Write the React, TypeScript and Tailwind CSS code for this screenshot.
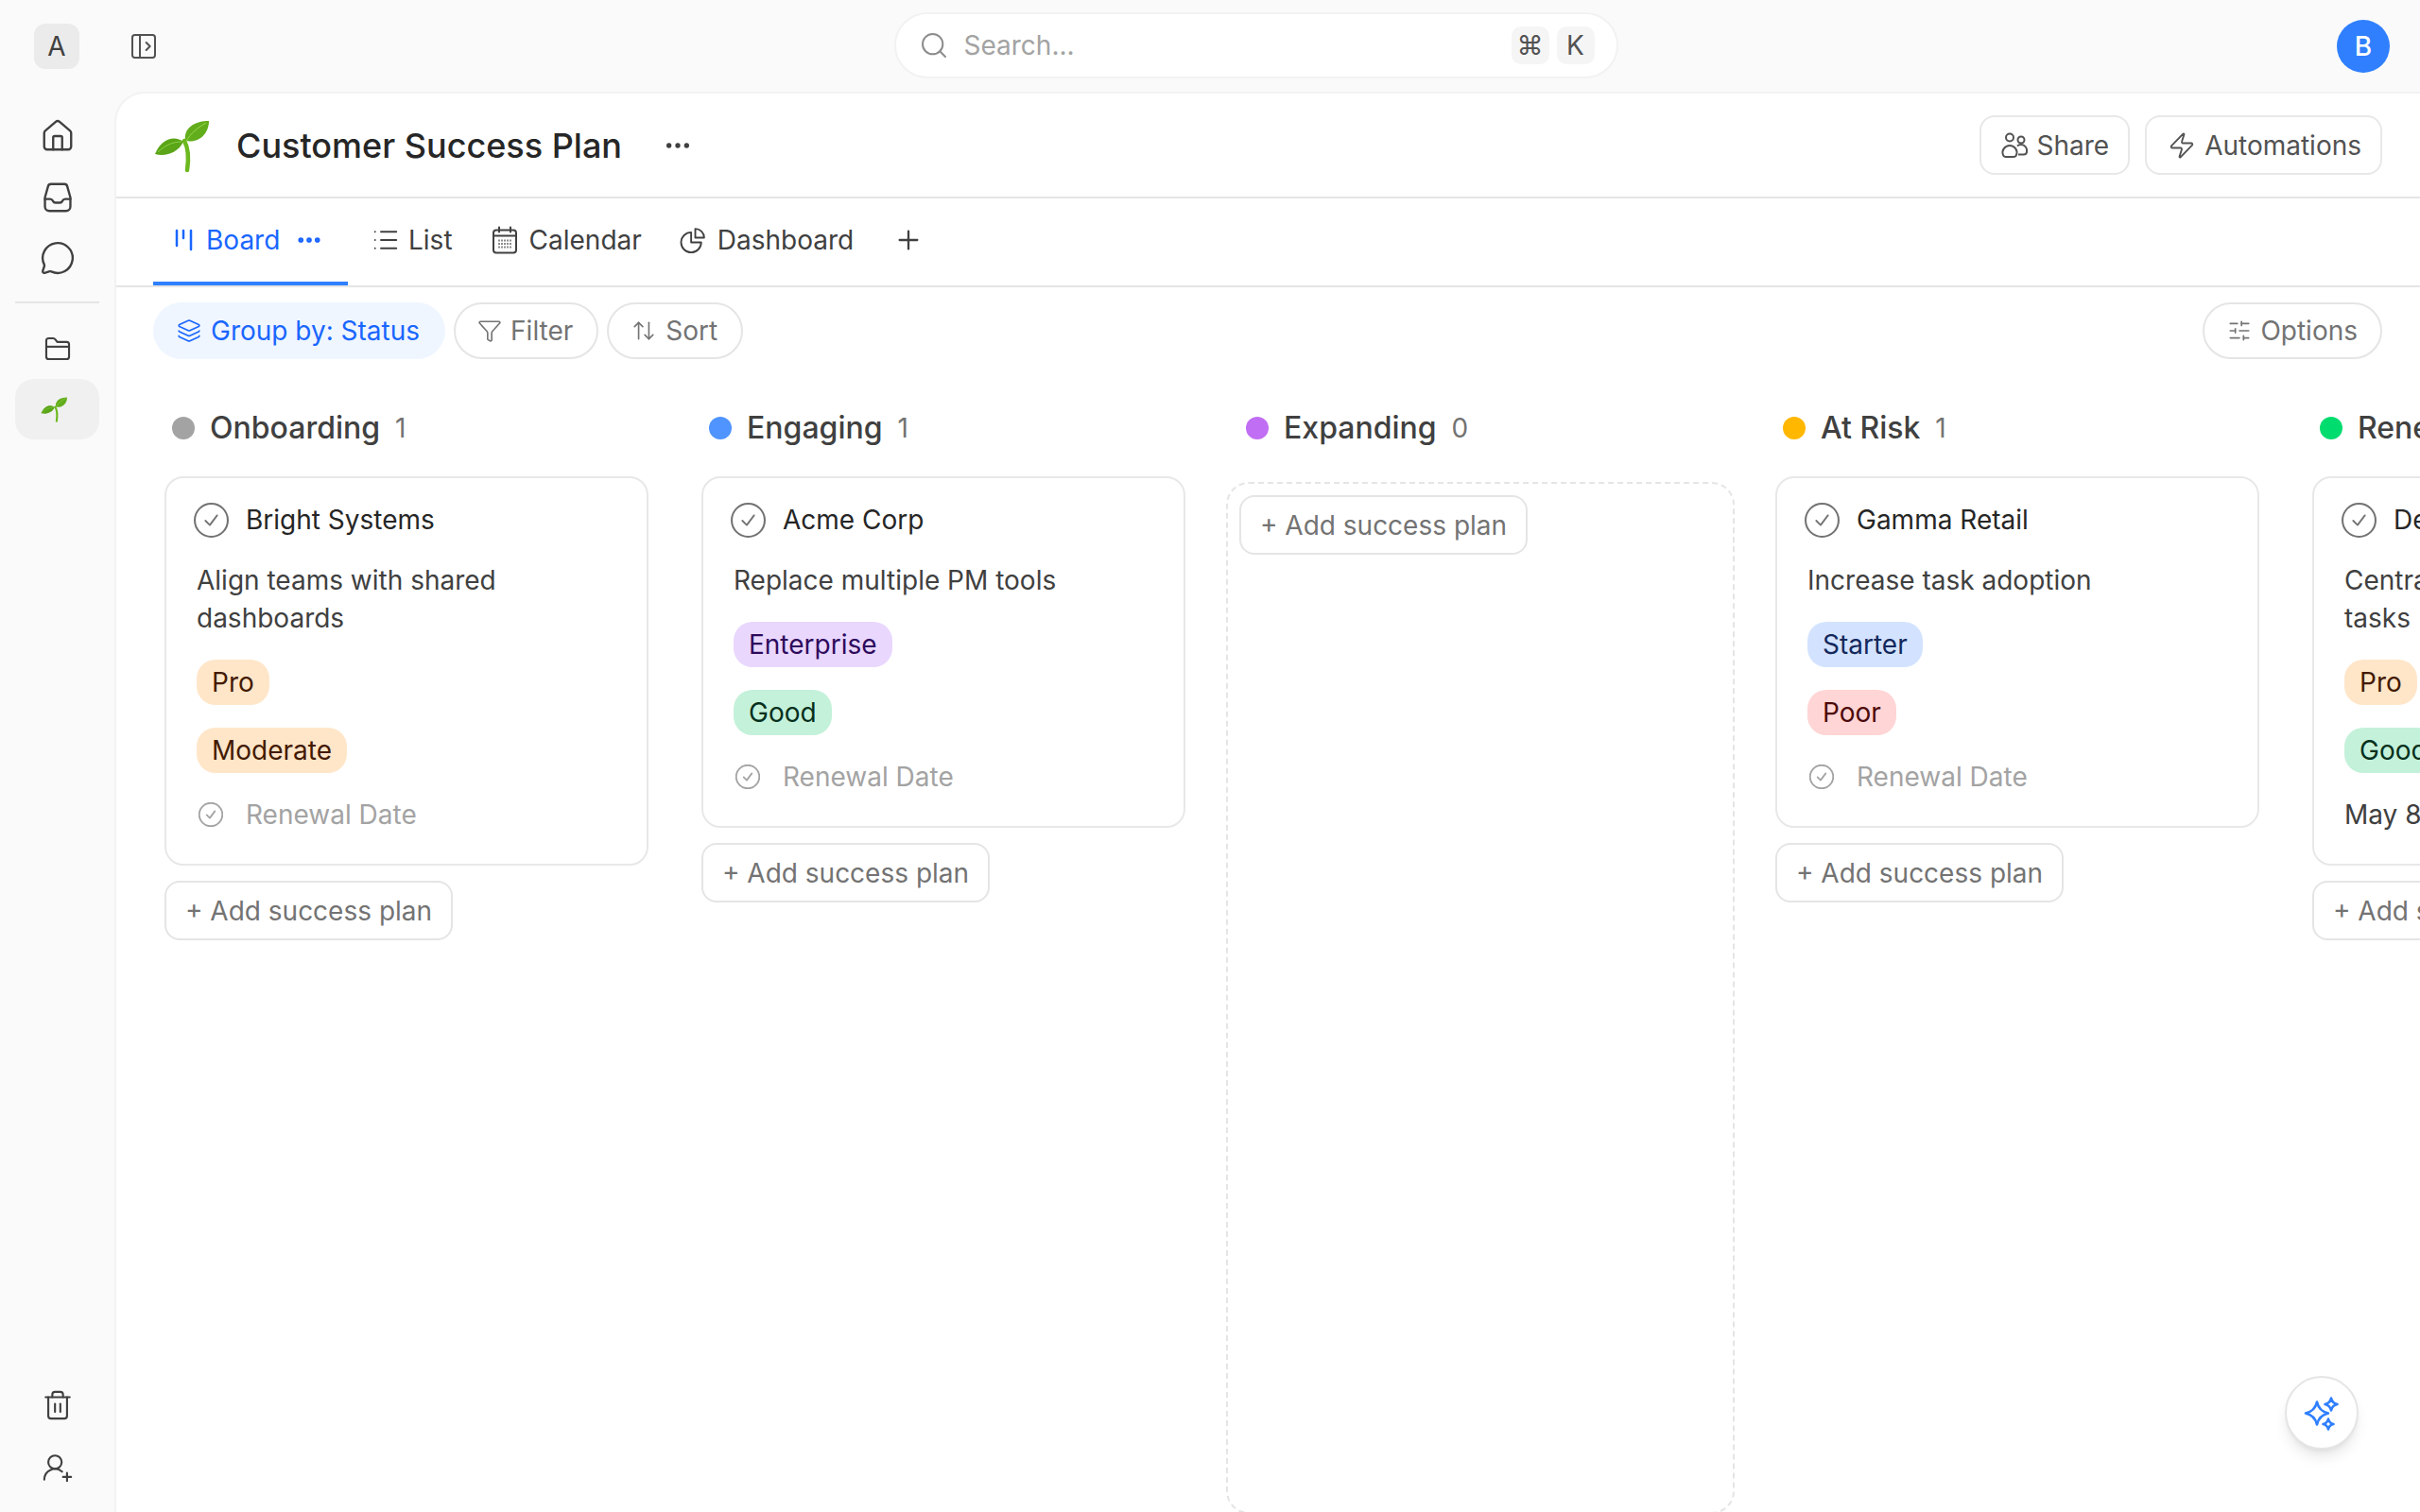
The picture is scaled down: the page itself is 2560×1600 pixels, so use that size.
import {
  Ellipsis,
  Funnel,
  House,
  Layers,
  List,
  MessageCircle,
  PanelLeftOpen,
  Plus,
  Search,
  SlidersHorizontal,
  ArrowUpDown,
  Trash2,
  UserRoundPlus,
  Zap,
} from 'lucide-react';

function Sprout({ className }: { className: string }) {
  return (
    <svg viewBox="0 0 62 58" className={className}>
      <path d="M34 24C39 33 38.500 45 37 55" fill="none" stroke="#6cb91f" strokeWidth="4.500" strokeLinecap="round" />
      <path d="M35 24C33 11 44 3 60 3C60 16 50 27 35 24Z" fill="#62ad1c" />
      <path d="M36 24C41 16 48 10 57 5" fill="none" stroke="#9ad94f" strokeWidth="1" />
      <path d="M33 25C24 18 10 21 3 38C14 41 27 37 33 25Z" fill="#5aa518" />
      <path d="M31 25C21 25 12 30 6 36" fill="none" stroke="#8ed044" strokeWidth="1" />
    </svg>
  );
}

function InboxIcon() {
  return (
    <svg viewBox="0 0 24 24" fill="none" stroke="#404040" strokeWidth="1.500" strokeLinejoin="round" strokeLinecap="round" className="h-[38px] w-[38px]">
      <path d="M7.500 3h9a2 2 0 0 1 1.900 1.500L20.500 12v6a3 3 0 0 1-3 3h-11a3 3 0 0 1-3-3v-6l2.100-7.500A2 2 0 0 1 7.500 3Z" />
      <path d="M3.500 13H7c1 0 1.400.5 1.800 1.300.4.800 1 1.200 1.800 1.200h2.800c.8 0 1.400-.4 1.800-1.200.4-.8.800-1.300 1.800-1.300h3.500" />
    </svg>
  );
}

function FolderIcon() {
  return (
    <svg viewBox="0 0 24 24" fill="none" stroke="#404040" strokeWidth="1.500" strokeLinejoin="round" className="h-[34px] w-[34px]">
      <path d="M3.500 18V6a1.800 1.800 0 0 1 1.800-1.800h3.400c.6 0 1.100.3 1.500.8l1.500 2h7a1.800 1.800 0 0 1 1.800 1.800v9.200a1.800 1.800 0 0 1-1.800 1.800H5.300A1.800 1.800 0 0 1 3.500 18Z" />
      <path d="M3.500 10.500h17" />
    </svg>
  );
}

function BoardIcon() {
  return (
    <svg viewBox="0 0 22 24" fill="none" stroke="#1a66ff" strokeWidth="2.500" strokeLinecap="round" className="h-[24px] w-[22px]">
      <path d="M3 2v16M10 2v8M18 2v20" />
    </svg>
  );
}

function CalendarIcon() {
  return (
    <svg viewBox="0 0 28 30" fill="none" className="h-[30px] w-[28px]">
      <rect x="2" y="4.500" width="24" height="24" rx="3" stroke="#404040" strokeWidth="2" />
      <path d="M2 10.500h24M8 1.500v5M20 1.500v5" stroke="#404040" strokeWidth="2" strokeLinecap="round" />
      <path d="M7 15.500h14M7 19h14M7 22.500h14" stroke="#8c8c8c" strokeWidth="2" strokeDasharray="2 1" />
    </svg>
  );
}

function PieIcon() {
  return (
    <svg viewBox="0 0 24 24" fill="none" stroke="#404040" strokeWidth="1.500" strokeLinejoin="round" className="h-[30px] w-[30px]">
      <path d="M10.500 5.500A8.500 8.500 0 1 0 19 14h-8.500Z" />
      <path d="M14 2.500a7.500 7.500 0 0 1 7.500 7.500H14Z" />
    </svg>
  );
}

function ShareIcon() {
  return (
    <svg viewBox="0 0 30 30" fill="none" stroke="#525252" strokeWidth="2" className="h-[30px] w-[30px]">
      <circle cx="10" cy="6.500" r="4" />
      <circle cx="22" cy="9" r="3.500" />
      <path d="M3 25c-2-5 2-10 7-10 5 0 9 5 7 10-.5 1.500-2 2-3 2H6c-1 0-2.500-.500-3-2Z" />
      <path d="M18 15.500c1-1 2.500-1.500 4-1.500 4 0 7 4 6 8-.4 1.600-1.500 2.500-3 2.500h-6" />
    </svg>
  );
}

function sparkle(cx: number, cy: number, r: number) {
  const k = r * 0.18;
  return `M${cx} ${cy - r}Q${cx + k} ${cy - k} ${cx + r} ${cy}Q${cx + k} ${cy + k} ${cx} ${cy + r}Q${cx - k} ${cy + k} ${cx - r} ${cy}Q${cx - k} ${cy - k} ${cx} ${cy - r}Z`;
}

function CheckCircle({ small }: { small?: boolean }) {
  return (
    <svg viewBox="0 0 36 36" fill="none" className={small ? 'h-[26px] w-[26px] shrink-0' : 'h-[37px] w-[37px] shrink-0'}>
      <circle cx="18" cy="18" r="17" stroke={small ? '#a3a3a3' : '#737373'} strokeWidth={small ? 2.6 : 2} />
      <path d="M12 18.500l4.500 4.500L24 13" stroke={small ? '#a3a3a3' : '#737373'} strokeWidth={small ? 2.4 : 1.800} strokeLinecap="round" strokeLinejoin="round" />
    </svg>
  );
}

const pillStyles: Record<string, string> = {
  Pro: 'bg-[#ffe6c9] text-[#431a03]',
  Moderate: 'bg-[#ffe6c9] text-[#431a03]',
  Enterprise: 'bg-[#e9d7fe] text-[#2e0a5c]',
  Good: 'bg-[#c4f1da] text-[#06301c]',
  Starter: 'bg-[#d3e3ff] text-[#14285c]',
  Poor: 'bg-[#ffd5d5] text-[#4c0a0a]',
};

interface Plan {
  name: string;
  goal: string;
  plan: string;
  health: string;
  date?: string;
}

interface Column {
  title: string;
  dot: string;
  count: number;
  card?: Plan;
}

const columns: Column[] = [
  {
    title: 'Onboarding',
    dot: 'bg-[#a3a3a3]',
    count: 1,
    card: { name: 'Bright Systems', goal: 'Align teams with shared dashboards', plan: 'Pro', health: 'Moderate' },
  },
  {
    title: 'Engaging',
    dot: 'bg-[#4f94ff]',
    count: 1,
    card: { name: 'Acme Corp', goal: 'Replace multiple PM tools', plan: 'Enterprise', health: 'Good' },
  },
  { title: 'Expanding', dot: 'bg-[#c06ef3]', count: 0 },
  {
    title: 'At Risk',
    dot: 'bg-[#ffb700]',
    count: 1,
    card: { name: 'Gamma Retail', goal: 'Increase task adoption', plan: 'Starter', health: 'Poor' },
  },
  {
    title: 'Renewal',
    dot: 'bg-[#00dc6e]',
    count: 1,
    card: { name: 'Delta Health', goal: 'Centralize customer onboarding tasks', plan: 'Pro', health: 'Good', date: 'May 8, 2025' },
  },
];

function Pill({ label }: { label: string }) {
  return (
    <span className={`mt-[24px] flex h-[48px] w-fit items-center rounded-[20px] px-[16px] text-[28px] ${pillStyles[label]}`}>
      {label}
    </span>
  );
}

function PlanCard({ card }: { card: Plan }) {
  return (
    <div className="flex flex-col rounded-[20px] border-2 border-[#e8e8e8] bg-white pt-[26px] pr-[24px] pb-[32px] pl-[29px]">
      <div className="flex h-[36px] items-center gap-[18px] text-[28px] text-[#262626]">
        <CheckCircle />
        <span className="whitespace-nowrap">{card.name}</span>
      </div>
      <p className="mt-[26px] pl-[3px] text-[28px] leading-[40px] text-[#404040]">{card.goal}</p>
      <div className="pl-[3px]">
        <Pill label={card.plan} />
        <Pill label={card.health} />
      </div>
      {card.date ? (
        <div className="mt-[24px] h-[40px] pl-[3px] text-[28px] leading-[40px] whitespace-nowrap text-[#404040]">{card.date}</div>
      ) : (
        <div className="mt-[24px] flex h-[40px] items-center gap-[24px] pl-[5px] text-[28px] text-[#a3a3a3]">
          <CheckCircle small />
          Renewal Date
        </div>
      )}
    </div>
  );
}

function AddButton() {
  return (
    <button className="flex h-[63px] w-[305px] items-center justify-center rounded-[16px] border-2 border-[#e5e5e5] bg-white text-[28px] whitespace-nowrap text-[#737373]">
      + Add success plan
    </button>
  );
}

export default function App() {
  return (
    <div className="flex h-screen w-screen flex-col overflow-hidden bg-[#fafafa] font-['Inter',sans-serif]">
      <header className="flex h-[97px] shrink-0 items-center justify-between pr-[32px] pl-[36px]">
        <div className="flex items-center gap-[52px]">
          <div className="flex h-[48px] w-[48px] items-center justify-center rounded-[12px] bg-[#ebebeb] text-[28px] text-[#404040]">A</div>
          <PanelLeftOpen size={32} strokeWidth={1.5} color="#525252" />
        </div>
        <div className="-mt-[2px] ml-[17px] flex h-[70px] w-[766px] items-center rounded-full border-2 border-[#f2f2f2] bg-white pr-[23px] pl-[24px]">
          <Search size={32} strokeWidth={1.5} color="#8c8c8c" />
          <span className="ml-[16px] text-[28px] text-[#a3a3a3]">Search...</span>
          <span className="ml-auto flex h-[40px] w-[40px] items-center justify-center rounded-[10px] bg-[#f5f5f5] text-[28px] text-[#525252]">⌘</span>
          <span className="ml-[8px] flex h-[40px] w-[40px] items-center justify-center rounded-[10px] bg-[#f5f5f5] text-[28px] text-[#525252]">K</span>
        </div>
        <div className="flex h-[56px] w-[56px] items-center justify-center rounded-full bg-[#2f7fff] text-[28px] font-medium text-white">B</div>
      </header>

      <div className="flex min-h-0 flex-1">
        <aside className="flex w-[121px] shrink-0 flex-col items-center px-[16px]">
          <div className="mt-[28px] flex h-[38px] items-center"><House size={38} strokeWidth={1.5} color="#404040" /></div>
          <div className="mt-[27px] flex h-[38px] items-center"><InboxIcon /></div>
          <div className="mt-[26px] flex h-[38px] items-center"><MessageCircle size={38} strokeWidth={1.5} color="#404040" /></div>
          <div className="mt-[27px] h-[2px] w-full bg-[#e5e5e5]" />
          <div className="mt-[31px] flex h-[34px] items-center"><FolderIcon /></div>
          <div className="mt-[15px] flex h-[64px] w-full items-center justify-center rounded-[20px] bg-[#f0f0f0]">
            <Sprout className="mr-[8px] h-[28px] w-[30px]" />
          </div>
          <div className="mt-auto flex h-[34px] items-center"><Trash2 size={34} strokeWidth={1.5} color="#404040" /></div>
          <div className="mt-[32px] mb-[30px] flex h-[34px] items-center"><UserRoundPlus size={34} strokeWidth={1.5} color="#404040" /></div>
        </aside>

        <main className="relative flex min-w-0 flex-1 flex-col rounded-tl-[32px] border-t-2 border-l-2 border-[#f2f2f2] bg-white">
          <div className="flex h-[111px] shrink-0 items-center border-b-2 border-[#e5e5e5] pr-[40px] pl-[38px]">
            <Sprout className="h-[58px] w-[62px]" />
            <h1 className="ml-[27px] text-[36px] font-medium whitespace-nowrap text-[#262626]">Customer Success Plan</h1>
            <Ellipsis className="ml-[43px]" size={32} strokeWidth={2} color="#404040" />
            <button className="ml-auto flex h-[63px] items-center gap-[8px] rounded-[16px] border-2 border-[#e8e8e8] pr-[20px] pl-[20px] text-[28px] text-[#525252]">
              <ShareIcon />
              Share
            </button>
            <button className="ml-[16px] flex h-[63px] items-center gap-[9px] rounded-[16px] border-2 border-[#e8e8e8] pr-[20px] pl-[22px] text-[28px] text-[#525252]">
              <Zap size={30} strokeWidth={1.5} color="#525252" />
              Automations
            </button>
          </div>

          <nav className="flex h-[94px] shrink-0 items-stretch border-b-2 border-[#e5e5e5] pl-[39px] text-[28px] text-[#404040]">
            <div className="flex w-[206px] items-center border-b-4 border-[#2f7fff] pl-[22px] text-[#1a66ff]">
              <BoardIcon />
              <span className="ml-[12px]">Board</span>
              <Ellipsis className="ml-[16px]" size={30} strokeWidth={2.5} color="#1a66ff" />
            </div>
            <div className="ml-[25px] flex items-center gap-[9px] pb-[4px]">
              <List size={30} strokeWidth={1.5} color="#404040" />
              List
            </div>
            <div className="ml-[41px] flex items-center gap-[12px] pb-[4px]">
              <CalendarIcon />
              Calendar
            </div>
            <div className="ml-[39px] flex items-center gap-[11px] pb-[4px]">
              <PieIcon />
              Dashboard
            </div>
            <div className="ml-[42px] flex items-center pb-[4px]"><Plus size={32} strokeWidth={1.75} color="#404040" /></div>
          </nav>

          <div className="mt-[16px] flex h-[60px] shrink-0 items-stretch gap-[9px] pr-[40px] pl-[39px] text-[28px] text-[#737373]">
            <div className="flex items-center gap-[10px] rounded-full bg-[#eff6ff] pr-[27px] pl-[25px] text-[#1a66ff]">
              <Layers size={26} strokeWidth={1.5} color="#1a66ff" />
              Group by: Status
            </div>
            <div className="flex items-center gap-[9px] rounded-full border-2 border-[#e5e5e5] pr-[25px] pl-[23px]">
              <Funnel size={26} strokeWidth={1.5} color="#737373" />
              Filter
            </div>
            <div className="flex items-center gap-[10px] rounded-full border-2 border-[#e5e5e5] pr-[25px] pl-[24px]">
              <ArrowUpDown size={26} strokeWidth={1.5} color="#737373" />
              Sort
            </div>
            <div className="ml-auto flex items-center gap-[9px] rounded-full border-2 border-[#e5e5e5] pr-[24px] pl-[24px]">
              <SlidersHorizontal size={26} strokeWidth={1.5} color="#737373" />
              Options
            </div>
          </div>

          <div className="mt-[49px] flex min-h-0 flex-1 gap-[32px] overflow-hidden pl-[39px]">
            {columns.map((column) => (
              <section key={column.title} className="flex w-[536px] shrink-0 flex-col">
                <div className="flex h-[48px] items-center pl-[20px]">
                  <span className={`h-[24px] w-[24px] rounded-full ${column.dot}`} />
                  <span className="ml-[16px] text-[32px] font-medium text-[#404040]">{column.title}</span>
                  <span className="ml-[16px] text-[28px] text-[#737373]">{column.count}</span>
                </div>
                {column.card ? (
                  <div className="mt-[27px] flex flex-col gap-[16px] px-[12px]">
                    <PlanCard card={column.card} />
                    <AddButton />
                  </div>
                ) : (
                  <div className="-mx-[1px] mt-[33px] -mb-[2px] flex-1 rounded-[24px] border-2 border-dashed border-[#e5e5e5] px-[12px] pt-[12px]">
                    <AddButton />
                  </div>
                )}
              </section>
            ))}
          </div>

          <button className="absolute right-[65px] bottom-[66px] flex h-[78px] w-[78px] items-center justify-center rounded-full border-2 border-[#e5e5e5] bg-white shadow-lg">
            <svg viewBox="0 0 40 40" fill="none" stroke="#2f7fff" strokeWidth="2.600" strokeLinejoin="round" className="h-[40px] w-[40px]">
              <path d={sparkle(15, 20.5, 12)} />
              <path d={sparkle(30, 11, 6.5)} />
              <path d={sparkle(27, 32, 5.5)} />
            </svg>
          </button>
        </main>
      </div>
    </div>
  );
}
